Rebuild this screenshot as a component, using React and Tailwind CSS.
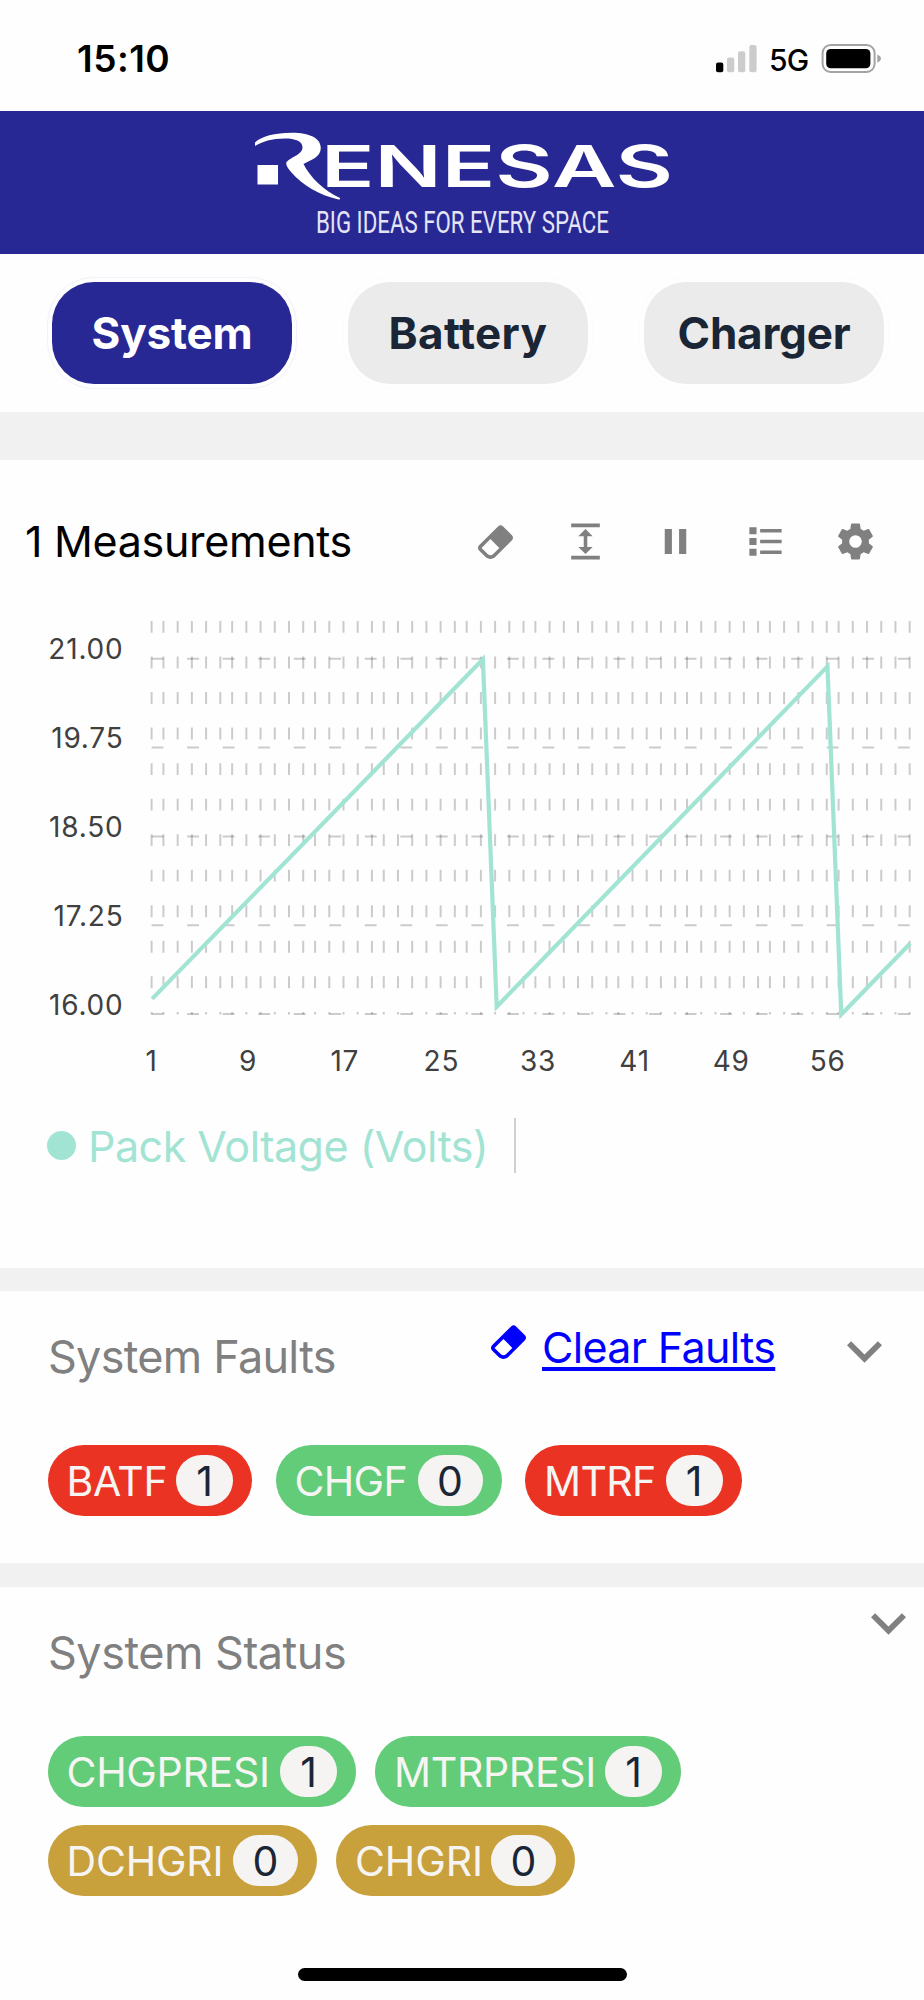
const ICONS = {
  eraser:
    "M16.24,3.56L21.19,8.5C21.97,9.29 21.97,10.55 21.19,11.34L12,20.53C10.44,22.09 7.91,22.09 6.34,20.53L2.81,17C2.03,16.21 2.03,14.95 2.81,14.16L13.41,3.56C14.2,2.78 15.46,2.78 16.24,3.56M4.22,15.58L7.76,19.11C8.54,19.9 9.8,19.9 10.59,19.11L14.12,15.58L9.17,10.63L4.22,15.58Z",
  expand:
    "M13,9V15H16L12,19L8,15H11V9H8L12,5L16,9H13M4,2H20V4H4V2M4,20H20V22H4V20Z",
  pause: "M14,19H18V5H14M6,19H10V5H6V19Z",
  list: "M3,4H7V8H3V4M9,5V7H21V5H9M3,10H7V14H3V10M9,11V13H21V11H9M3,16H7V20H3V16M9,17V19H21V17H9",
  cog: "M12,15.5A3.5,3.5 0 0,1 8.5,12A3.5,3.5 0 0,1 12,8.5A3.5,3.5 0 0,1 15.5,12A3.5,3.5 0 0,1 12,15.5M19.43,12.97C19.47,12.65 19.5,12.33 19.5,12C19.5,11.67 19.47,11.34 19.43,11L21.54,9.37C21.73,9.22 21.78,8.95 21.66,8.73L19.66,5.27C19.54,5.05 19.27,4.96 19.05,5.05L16.56,6.05C16.04,5.66 15.5,5.32 14.87,5.07L14.5,2.42C14.46,2.18 14.25,2 14,2H10C9.75,2 9.54,2.18 9.5,2.42L9.13,5.07C8.5,5.32 7.96,5.66 7.44,6.05L4.95,5.05C4.73,4.96 4.46,5.05 4.34,5.27L2.34,8.73C2.21,8.95 2.27,9.22 2.46,9.37L4.57,11C4.53,11.34 4.5,11.67 4.5,12C4.5,12.33 4.53,12.65 4.57,12.97L2.46,14.63C2.27,14.78 2.21,15.05 2.34,15.27L4.34,18.73C4.46,18.95 4.73,19.03 4.95,18.95L7.44,17.94C7.96,18.34 8.5,18.68 9.13,18.93L9.5,21.58C9.54,21.82 9.75,22 10,22H14C14.25,22 14.46,21.82 14.5,21.58L14.87,18.93C15.5,18.67 16.04,18.34 16.56,17.94L19.05,18.95C19.27,19.03 19.54,18.95 19.66,18.73L21.66,15.27C21.78,15.05 21.73,14.78 21.54,14.63L19.43,12.97Z",
};

function Icon({ name, className = "" }) {
  return (
    <svg viewBox="0 0 24 24" className={`size-[43px] shrink-0 fill-current ${className}`} aria-hidden="true">
      <path fillRule="evenodd" d={ICONS[name]} />
    </svg>
  );
}

function Chevron({ className }) {
  return (
    <svg viewBox="6 8.58 12 7.42" className={`h-[22px] w-[35px] shrink-0 fill-[#808080] ${className}`} aria-hidden="true">
      <path d="M7.41,8.58L12,13.17L16.59,8.58L18,10L12,16L6,10L7.41,8.58Z" />
    </svg>
  );
}

function StatusBar() {
  return (
    <div className="flex h-[111px] items-start justify-between pr-[43px] pl-[77px]">
      <span className="mt-[36px] text-[37px] leading-[46px] font-semibold tracking-[0.5px] text-black">15:10</span>
      <div className="mt-[43px] flex h-[31px] items-center">
        <svg viewBox="0 0 41 31" className="h-[31px] w-[41px]">
          <rect x="0" y="19.5" width="7.3" height="9.7" rx="2" fill="#000" />
          <rect x="11" y="14.5" width="7.3" height="14.7" rx="2" fill="#ccc" />
          <rect x="22" y="8.2" width="7.3" height="21" rx="2" fill="#ccc" />
          <rect x="33.3" y="2" width="7.3" height="27.2" rx="2" fill="#ccc" />
        </svg>
        <span className="ml-[12px] w-[52px] pt-[3px] text-[30px] leading-[33px] font-medium tracking-[-0.8px] text-black">5G</span>
        <svg viewBox="0 0 60 31" className="h-[31px] w-[60px]">
          <rect x="1.6" y="2" width="52" height="27" rx="8" fill="none" stroke="#a3a3a3" strokeWidth="2" />
          <rect x="5.2" y="6" width="44.2" height="19.2" rx="4.5" fill="#000" />
          <path d="M56.3 11.5Q60 13.2 60 15.5T56.3 19.7Z" fill="#a3a3a3" />
        </svg>
      </div>
    </div>
  );
}

function Logo() {
  return (
    <svg viewBox="0 0 450 142" className="h-[142px] w-[450px] overflow-visible" aria-label="Renesas">
      <g fill="#fff">
        <path d="M15 31.500C21 25.500 35 21.800 52 21.800C69 21.800 80.800 27 80.800 37C80.800 46 71 49 63.500 53C70 66 84 80 100 87C100.500 88 99.500 88.800 98.500 88.500C79 84 62 74 51.500 61.500C48.500 58 46 55 46.200 51.800C49 46.500 62.500 44 62.500 36.500C62.500 30 55 27.500 45 27.500C32 27.500 22 30.500 15 35Z" />
        <rect x="17.500" y="54" width="20.500" height="19.500" />
        <text x="81" y="76" fontSize="58" fontWeight="600" textLength="352" lengthAdjust="spacingAndGlyphs">
          ENESAS
        </text>
      </g>
      <text
        x="76"
        y="121.500"
        fontSize="30.500"
        fill="#e4e4f4"
        textLength="293"
        lengthAdjust="spacingAndGlyphs"
        fontFamily="Roboto, sans-serif"
      >
        BIG IDEAS FOR EVERY SPACE
      </text>
    </svg>
  );
}

function Tab({ label, active, className }) {
  return (
    <button
      className={`h-[102px] w-[240px] rounded-[42px] text-[44px] leading-[102px] font-bold ${
        active
          ? "bg-[#282895] text-white outline-1 outline-offset-[4px] outline-[#f1f1fa]"
          : "bg-[#ebebeb] text-[#1a2536] outline-1 outline-offset-[4px] outline-[#fcfcfc]"
      } ${className}`}
    >
      {label}
    </button>
  );
}

const PT = 2.369;
const X0 = 151.6;
const POINTS = [
  [0, 16.22],
  [24, 21.0],
  [25, 16.11],
  [49, 20.9],
  [50, 16.0],
  [55, 17.0],
];
const xAt = (i) => X0 + ((i * 320) / 55) * PT;
const yAt = (v) => 414 - ((v - 16) / 5) * 355.2;

function Chart() {
  const columns = Array.from({ length: 56 }, (_, i) => X0 + Math.floor((i * 320) / 55 + 0.001) * PT);
  const ticks = ["21.00", "19.75", "18.50", "17.25", "16.00"];
  const labels = ["1", "9", "17", "25", "33", "41", "49", "56"];
  return (
    <svg viewBox="0 0 924 500" className="block h-[500px] w-[924px]">
      <g stroke="#000" strokeOpacity="0.2" strokeWidth="2" strokeDasharray="11.845 23.690">
        {columns.map((x) => (
          <line key={x} x1={x} x2={x} y1="21" y2="414.500" />
        ))}
        {ticks.map((t) => (
          <line key={t} x1={X0} x2={X0 + 320 * PT} y1={yAt(Number(t))} y2={yAt(Number(t))} />
        ))}
      </g>
      <polyline
        points={POINTS.map(([i, v]) => `${xAt(i) + 0.5},${yAt(v) + 0.5}`).join(" ")}
        fill="none"
        stroke="#a2e4d3"
        strokeWidth="4.200"
        strokeLinejoin="miter"
      />
      <g fill="#404040" fontSize="28" letterSpacing="0.8">
        {ticks.map((t) => (
          <text key={t} x="123.500" y={yAt(Number(t)) + 0.5} textAnchor="end">
            {t}
          </text>
        ))}
        {labels.map((l, i) => (
          <text key={l} x={X0 + i * 96.6} y="471" textAnchor="middle">
            {l}
          </text>
        ))}
      </g>
    </svg>
  );
}

function Chip({ label, value, className, labelClass = "", badgeClass }) {
  return (
    <div className={`flex h-[71px] items-center justify-between rounded-full pr-[19px] pl-[19px] ${className}`}>
      <span className={`pt-px text-[41px] leading-[71px] font-normal whitespace-nowrap text-[#f7f5f3] ${labelClass}`}>{label}</span>
      <span
        className={`h-[51px] shrink-0 rounded-[25.5px] bg-[#f6f4f3] text-center text-[41px] leading-[52px] text-[#1a2536] ${badgeClass}`}
      >
        {value}
      </span>
    </div>
  );
}

export default function App() {
  return (
    <div className="h-[2000px] w-[924px] overflow-hidden bg-[#fefefe] font-['Inter',sans-serif]">
      <StatusBar />
      <header className="flex h-[143px] justify-center bg-[#282895] pl-[6px]">
        <Logo />
      </header>
      <nav className="flex h-[158px] gap-[56px] pt-[28px] pl-[52px]">
        <Tab label="System" active className="tracking-[-0.2px]" />
        <Tab label="Battery" className="tracking-[0.4px]" />
        <Tab label="Charger" className="tracking-[-0.2px]" />
      </nav>
      <div className="h-[48px] bg-[#f1f1f1]" />

      <section className="h-[808px] pt-[38px]">
        <div className="flex h-[87px] items-center pl-[25px] text-[#808080]">
          <h2 className="w-[449px] text-[43px] whitespace-nowrap tracking-[-0.3px] text-black">1 Measurements</h2>
          <div className="flex gap-[47px]">
            <Icon name="eraser" />
            <Icon name="expand" />
            <Icon name="pause" />
            <Icon name="list" />
            <Icon name="cog" />
          </div>
        </div>
        <div className="mt-[15px]">
          <Chart />
        </div>
        <div className="mt-[18px] flex h-[55px] items-center pl-[47px]">
          <span className="size-[29px] rounded-full bg-[#a2e4d3]" />
          <span className="ml-[12px] w-[426px] pt-px text-[43px] leading-[55px] font-normal whitespace-nowrap tracking-[-0.5px] text-[#a2e4d3]">
            Pack Voltage (Volts)
          </span>
          <span className="h-[55px] w-[2px] bg-[#d0d0d0]" />
        </div>
      </section>
      <div className="h-[23px] bg-[#f1f1f1]" />

      <section className="h-[272px]">
        <div className="flex h-[154px] items-start pl-[47px]">
          <h2 className="mt-[36px] w-[440px] pl-px text-[45px] leading-[60px] font-normal tracking-[-0.75px] text-[#808080]">System Faults</h2>
          <Icon name="eraser" className="mt-[29px] text-[#0000ff]" />
          <a className="mt-[26px] ml-[12px] w-[232px] text-[43px] leading-[60px] font-normal whitespace-nowrap tracking-[-0.65px] text-[#0000ff] underline decoration-[3.5px] underline-offset-[4px] [text-decoration-skip-ink:none]">
            Clear Faults
          </a>
          <Chevron className="mt-[50px] ml-[73px]" />
        </div>
        <div className="flex gap-[23.5px] pl-[47.5px]">
          <Chip label="BATF" value="1" className="w-[204.5px] bg-[#eb3323]" badgeClass="w-[57px]" labelClass="tracking-[-0.4px]" />
          <Chip label="CHGF" value="0" className="w-[226px] bg-[#62cc78]" badgeClass="w-[65px]" labelClass="tracking-[-0.7px]" />
          <Chip label="MTRF" value="1" className="w-[216.5px] bg-[#eb3323]" badgeClass="w-[57px]" labelClass="tracking-[-0.6px]" />
        </div>
      </section>
      <div className="h-[24px] bg-[#f1f1f1]" />

      <section className="h-[381px]">
        <div className="flex h-[149px] items-start justify-between pr-[18px] pl-[48px]">
          <h2 className="mt-[36px] text-[45px] leading-[60px] font-normal tracking-[-0.5px] text-[#808080]">System Status</h2>
          <Chevron className="mt-[26px]" />
        </div>
        <div className="flex gap-[19px] pl-[47.5px]">
          <Chip label="CHGPRESI" value="1" className="w-[308.5px] bg-[#62cc78]" badgeClass="w-[57px]" labelClass="tracking-[-0.3px]" />
          <Chip label="MTRPRESI" value="1" className="w-[306px] bg-[#62cc78]" badgeClass="w-[57px]" labelClass="tracking-[-0.3px]" />
        </div>
        <div className="mt-[18px] flex gap-[19px] pl-[47.5px]">
          <Chip label="DCHGRI" value="0" className="w-[269.5px] bg-[#c8a03c]" badgeClass="w-[65px]" labelClass="tracking-[-0.2px]" />
          <Chip label="CHGRI" value="0" className="w-[239px] bg-[#c8a03c]" badgeClass="w-[65px]" labelClass="tracking-[-0.1px]" />
        </div>
      </section>
      <div className="mx-auto h-[13px] w-[329px] rounded-full bg-black" />
    </div>
  );
}
